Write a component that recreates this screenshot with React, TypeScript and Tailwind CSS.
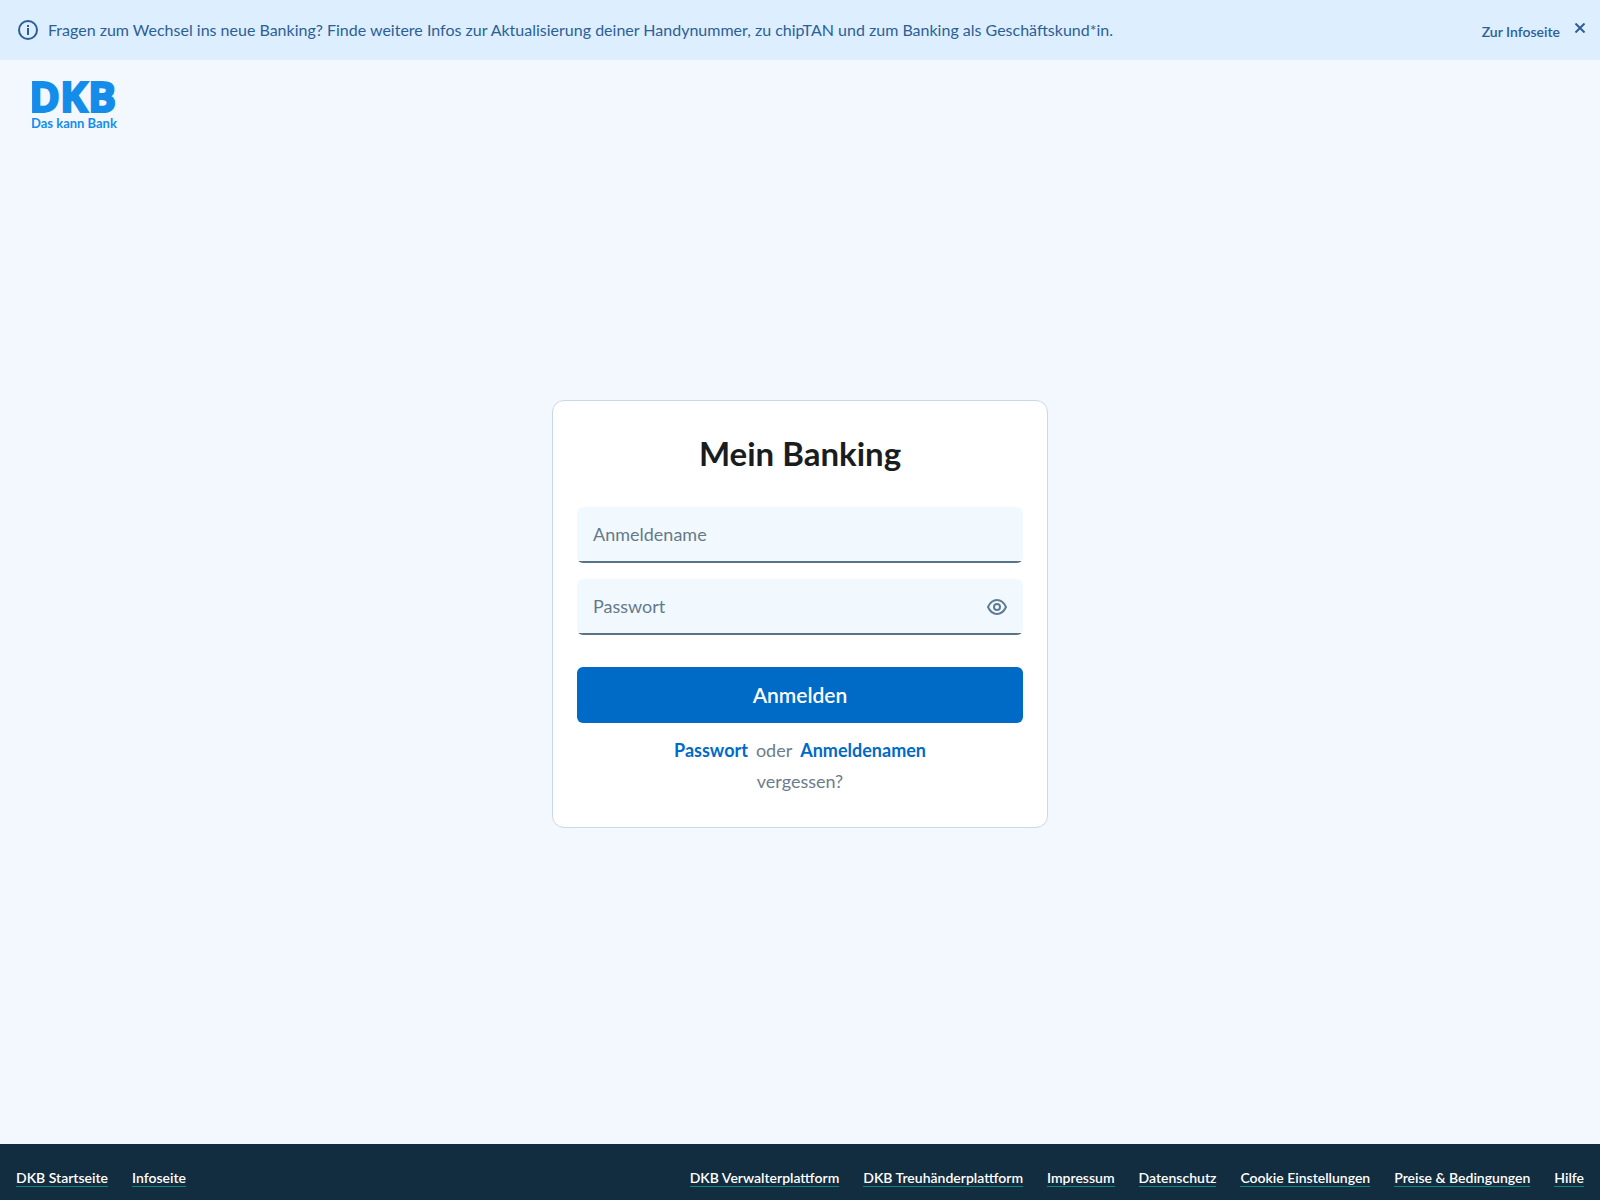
import { useState, type ReactNode } from 'react';

const leftLinks = ['DKB Startseite', 'Infoseite'];

const rightLinks = [
  'DKB Verwalterplattform',
  'DKB Treuhänderplattform',
  'Impressum',
  'Datenschutz',
  'Cookie Einstellungen',
  'Preise & Bedingungen',
  'Hilfe',
];

const inputClass =
  'block h-14 w-full border-b-2 border-[#5b7387] bg-[#f1f9ff] pl-4 text-[18px] text-[#141a1f] placeholder:text-[#66798a] placeholder:opacity-100 outline-none';

function InfoIcon() {
  return (
    <svg width="20" height="20" viewBox="0 0 20 20" fill="none" className="shrink-0" aria-hidden="true">
      <circle cx="10" cy="10" r="9" stroke="currentColor" strokeWidth="2" />
      <path d="M9 5h2v2H9zM9 8h2v7H9z" fill="currentColor" />
    </svg>
  );
}

function EyeIcon() {
  return (
    <svg width="20" height="16" viewBox="0 0 20 16" fill="none" stroke="currentColor" strokeWidth="2" aria-hidden="true">
      <path d="M1 8C3.200 3.200 6.200 1 10 1s6.800 2.200 9 7c-2.200 4.800-5.200 7-9 7S3.200 12.800 1 8Z" strokeLinejoin="round" />
      <circle cx="10" cy="8" r="3" />
    </svg>
  );
}

function Banner({ onClose }: { onClose: () => void }) {
  return (
    <div className="flex min-h-[60px] items-center bg-[#dceeff] pr-[15px] pl-[18px] text-[#2c5f96]">
      <InfoIcon />
      <p className="ml-[10px] flex-1 text-[16px] leading-6">
        Fragen zum Wechsel ins neue Banking? Finde weitere Infos zur Aktualisierung deiner Handynummer, zu chipTAN und
        zum Banking als Geschäftskund*in.
      </p>
      <a href="#" className="mt-1 text-[14px] leading-5 font-semibold">
        Zur Infoseite
      </a>
      <button type="button" aria-label="Schließen" onClick={onClose} className="mb-1 ml-[15px] cursor-pointer">
        <svg width="10" height="10" viewBox="0 0 10 10" stroke="currentColor" strokeWidth="2" aria-hidden="true">
          <path d="M.5.5l9 9M9.500.5l-9 9" />
        </svg>
      </button>
    </div>
  );
}

function Logo() {
  return (
    <a href="#" className="block w-fit text-[#148dea]">
      <svg width="96" height="68" viewBox="0 0 96 68" fill="currentColor" role="img">
        <title>DKB</title>
        <text
          x="-3"
          y="48"
          stroke="currentColor"
          strokeWidth="2"
          className="font-['Open_Sans',sans-serif] text-[42px] font-bold"
        >
          DKB
        </text>
        <text x="-1" y="64" className="text-[13px] font-bold">
          Das kann Bank
        </text>
      </svg>
    </a>
  );
}

function Field({ children }: { children: ReactNode }) {
  return <div className="relative overflow-hidden rounded-md">{children}</div>;
}

function FooterLinks({ links }: { links: string[] }) {
  return (
    <ul className="flex flex-wrap gap-x-6 gap-y-2">
      {links.map((link) => (
        <li key={link}>
          <a href="#" className="block border-b border-[#0d8484] text-[14px] leading-[17px] font-semibold">
            {link}
          </a>
        </li>
      ))}
    </ul>
  );
}

export default function App() {
  const [showBanner, setShowBanner] = useState(true);
  const [showPassword, setShowPassword] = useState(false);

  return (
    <div className="flex min-h-screen flex-col bg-[#f3f8ff] font-['Lato',sans-serif]">
      {showBanner && <Banner onClose={() => setShowBanner(false)} />}

      <header className="px-8 pt-1 pb-5">
        <Logo />
      </header>

      <main className="flex flex-1 flex-col items-center justify-center px-4 pb-[68px]">
        <form
          onSubmit={(e) => e.preventDefault()}
          className="w-full max-w-[496px] rounded-xl border border-[#c9d8e6] bg-white px-6 pt-[31px] pb-[30px]"
        >
          <h1 className="mb-[33px] text-center text-[33px] leading-[42px] font-bold text-[#1a1d20]">Mein Banking</h1>

          <div className="flex flex-col gap-4">
            <Field>
              <input
                type="text"
                aria-label="Anmeldename"
                placeholder="Anmeldename"
                autoComplete="username"
                className={`${inputClass} pr-4`}
              />
            </Field>
            <Field>
              <input
                type={showPassword ? 'text' : 'password'}
                aria-label="Passwort"
                placeholder="Passwort"
                autoComplete="current-password"
                className={`${inputClass} pr-12`}
              />
              <button
                type="button"
                aria-label="Passwort anzeigen"
                onClick={() => setShowPassword(!showPassword)}
                className="absolute inset-y-0 right-4 flex cursor-pointer items-center text-[#5f7b94]"
              >
                <EyeIcon />
              </button>
            </Field>
          </div>

          <button
            type="submit"
            className="mt-8 h-14 w-full cursor-pointer rounded-md bg-[#006ac7] text-[21px] font-semibold text-white"
          >
            Anmelden
          </button>

          <div className="mt-3 text-center text-[18px] leading-[31px] text-[#6b7c8c]">
            <p className="flex justify-center gap-2">
              <a href="#" className="font-bold text-[#006ac7]">
                Passwort
              </a>
              oder
              <a href="#" className="font-bold text-[#006ac7]">
                Anmeldenamen
              </a>
            </p>
            <p>vergessen?</p>
          </div>
        </form>
      </main>

      <footer className="flex flex-wrap justify-between gap-x-6 gap-y-3 bg-[#132d40] px-4 pt-[25px] pb-[13px] text-white">
        <FooterLinks links={leftLinks} />
        <FooterLinks links={rightLinks} />
      </footer>
    </div>
  );
}
